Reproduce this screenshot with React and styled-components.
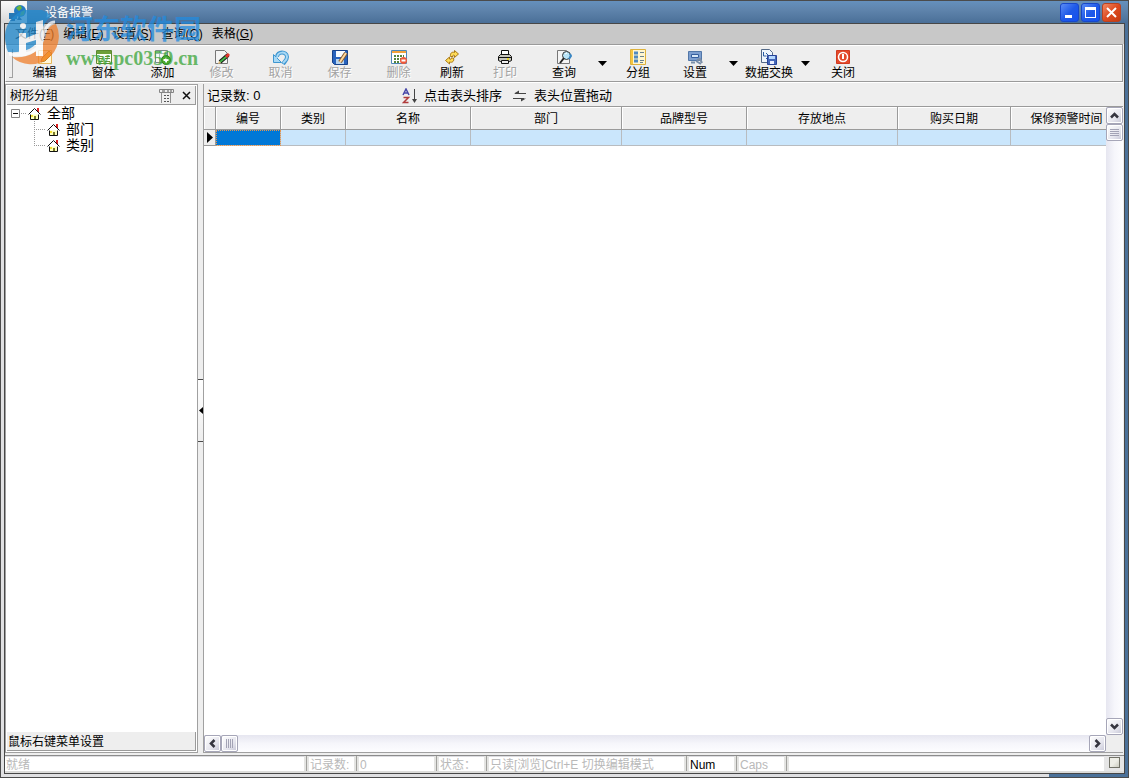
import React, { useState } from "react";
import styled, { createGlobalStyle, css } from "styled-components";

const GlobalStyle = createGlobalStyle`
	* {
		box-sizing: border-box;
	}
	body {
		margin: 0;
		color: #000;
		font: 12px/16px "Liberation Sans", "Noto Sans CJK SC", sans-serif;
	}
	button {
		margin: 0;
		padding: 0;
		border: none;
		background: none;
		color: inherit;
		font: inherit;
	}
	svg {
		display: block;
		flex: none;
	}
`;

// Window frame

const Window = styled.div`
	display: flex;
	flex-direction: column;
	height: 100vh;
	overflow: hidden;
	border: 1px solid #4b4b4b;
	background: #4b7199;
`;

const TitleBar = styled.header`
	display: flex;
	flex: none;
	height: 22px;
	padding-right: 7px;
	background: linear-gradient(#6590bd, #5f84ac 40%, #4a6f98);
`;

const AppIcon = styled.div`
	width: 26px;
	padding: 3px 0 0 6px;
	background: linear-gradient(#fafafa, #d8d8d8);
`;

const Title = styled.h1`
	flex: 1;
	margin: 0 0 0 18px;
	color: #fff;
	font-size: 12px;
	font-weight: 400;
	line-height: 24px;
`;

const WindowButtons = styled.div`
	display: flex;
	gap: 2px;
	padding-top: 2px;
`;

const WindowButton = styled.button`
	width: 19px;
	height: 19px;
	border: 1px solid ${(props) => (props.$close ? "#b9421f" : "#1747c9")};
	border-radius: 3px;
	background: ${(props) =>
		props.$close
			? "linear-gradient(135deg, #f08a66, #dd4b20 50%, #c73a10)"
			: "linear-gradient(135deg, #5b8cf5, #1f5ae8 50%, #1350f0)"};
`;

const Frame = styled.div`
	display: flex;
	flex: 1;
	min-height: 0;
	padding: 0 3px 3px;
	background: linear-gradient(90deg, #e0e0e2 93%, #4b7199 93%);
`;

const Body = styled.div`
	display: flex;
	flex: 1;
	flex-direction: column;
	min-width: 0;
	border: 1px solid #474747;
	background: #eee;
`;

// Menu and toolbar

const MenuBar = styled.nav`
	display: flex;
	flex: none;
	gap: 9px;
	height: 20px;
	padding-left: 10px;
	background: #c8c8c8;
`;

const MenuItem = styled.button`
	line-height: 20px;
`;

const ToolBar = styled.div`
	display: flex;
	flex: none;
	height: 38px;
	margin-right: 1px;
	border: 1px solid #9a9a9a;
	border-left-color: #fff;
	box-shadow: inset 0 1px #fff, 0 1px #fff;
`;

const Grip = styled.div`
	width: 4px;
	margin: 4px 2px 3px 3px;
	border-right: 1px solid #a0a0a0;
	border-bottom: 1px solid #a0a0a0;
`;

const ToolButton = styled.button`
	display: flex;
	flex: none;
	flex-direction: column;
	align-items: center;
	width: ${(props) => props.$width}px;
	padding-top: 4px;

	&:disabled {
		color: #a3a3a3;
		text-shadow: 1px 1px #fff;
	}
`;

const ToolLabel = styled.span`
	line-height: 16px;
	white-space: nowrap;
`;

const DropButton = styled.button`
	display: flex;
	flex: none;
	justify-content: center;
	width: ${(props) => props.$width}px;
	padding-top: 16px;
`;

// Tree panel

const Content = styled.main`
	display: flex;
	flex: 1;
	min-height: 0;
	padding: 2px 1px 2px 0;
`;

const TreePanel = styled.aside`
	display: flex;
	flex: none;
	flex-direction: column;
	width: 193px;
	padding: 1px;
	border: 1px solid #a0a0a0;
	background: #fff;
`;

const PanelBar = styled.div`
	display: flex;
	flex: none;
	align-items: center;
	gap: 8px;
	height: 19px;
	padding: 1px 4px 0 3px;
	border-right: 1px solid #9a9a9a;
	border-bottom: 1px solid #9a9a9a;
	background: #eee;
	line-height: 18px;
`;

const PanelTitle = styled.h2`
	flex: 1;
	margin: 0;
	font-size: 12px;
	font-weight: 400;
`;

const PanelFooter = styled(PanelBar)`
	padding-left: 1px;
`;

const Tree = styled.ul`
	flex: 1;
	margin: 0;
	padding: 0 0 0 4px;
	list-style: none;
	font-size: 14px;
`;

const Branch = styled.ul`
	margin: 0;
	padding: 0 0 0 23px;
	list-style: none;
`;

const TreeRow = styled.div`
	display: flex;
	align-items: center;
	height: 16px;
`;

const TreeLabel = styled.span`
	margin-left: 6px;
`;

const Expander = styled.button`
	display: flex;
`;

const Splitter = styled.div`
	display: flex;
	flex: none;
	flex-direction: column;
	justify-content: center;
	width: 6px;
	padding-bottom: 17px;
	border-right: 1px solid #a0a0a0;
`;

const SplitHandle = styled.button`
	display: flex;
	align-items: center;
	justify-content: flex-end;
	height: 63px;
	border-top: 1px solid #4a4a4a;
	border-bottom: 1px solid #4a4a4a;
	background: linear-gradient(#fff, #eee);
`;

// Record grid

const Records = styled.section`
	display: flex;
	flex: 1;
	flex-direction: column;
	min-width: 0;
`;

const InfoBar = styled.div`
	display: flex;
	flex: none;
	align-items: center;
	height: 22px;
	padding: 2px 0 0 3px;
	font-size: 13px;
`;

const Count = styled.span`
	width: 195px;
`;

const Hint = styled.span`
	display: flex;
	align-items: center;
	gap: 6px;
	margin-right: 10px;
`;

const GridArea = styled.div`
	display: grid;
	flex: 1;
	grid-template: minmax(0, 1fr) 17px / minmax(0, 1fr) 17px;
	min-height: 0;
	border-top: 1px solid #9a9a9a;
	border-bottom: 1px solid #a0a0a0;
`;

const Viewport = styled.div`
	overflow: hidden;
	background: #fff;
`;

const Table = styled.table`
	width: ${(props) => props.$width}px;
	border-collapse: separate;
	border-spacing: 0;
	table-layout: fixed;
`;

const HeadCell = styled.th`
	width: ${(props) => props.$width}px;
	height: 23px;
	padding: 2px 0 0;
	border-right: 1px solid #9a9a9a;
	border-bottom: 1px solid #9a9a9a;
	background: #eee;
	box-shadow: inset 1px 1px #fff;
	font-weight: 400;
`;

const Cell = styled.td`
	height: 16px;
	padding: 0;
	border-right: 1px solid #b8bcc0;
	border-bottom: 1px solid #b8bcc0;
	background: #cae6fc;

	${(props) =>
		props.$selected &&
		css`
			background: #0078d7;
			outline: 1px dotted #e8964c;
			outline-offset: -1px;
		`}
`;

const MarkerCell = styled.td`
	height: 16px;
	padding: 0 0 0 3px;
	border-right: 1px solid #9a9a9a;
	border-bottom: 1px solid #9a9a9a;
	background: #eee;
`;

const ScrollBar = styled.div`
	display: flex;
	flex-direction: ${(props) => (props.$vertical ? "column" : "row")};
	background: linear-gradient(
		${(props) => (props.$vertical ? "90deg" : "180deg")},
		#e6e6f0,
		#f6f6fb 50%,
		#fdfdff
	);
`;

const ScrollButton = styled.button`
	display: flex;
	flex: none;
	align-items: center;
	justify-content: center;
	width: 17px;
	height: 17px;
	margin: ${(props) =>
		props.$end ? (props.$vertical ? "auto 0 0" : "0 0 0 auto") : "0"};
	border: 1px solid #a6a6b8;
	border-radius: 2px;
	background: linear-gradient(135deg, #fff, #e6e6ee 60%, #c6c6d6);
	box-shadow: inset 0 0 0 1px #fff;
`;

// Status bar

const StatusBar = styled.footer`
	display: flex;
	flex: none;
	height: 18px;
	border-top: 1px solid #8c8c8c;
	border-bottom: 2px solid #dcdcda;
	background: #fff;
	box-shadow: inset 0 1px #dcdce0;
	line-height: 18px;
`;

const StatusCell = styled.div`
	display: flex;
	flex: none;
	justify-content: space-between;
	width: ${(props) => props.$width}px;
	padding-left: 1px;
	color: ${(props) => (props.$active ? "#000" : "#b9b9b9")};
	white-space: nowrap;

	&::after {
		content: "";
		width: 1px;
		border: 2px solid #e4e4e2;
		border-width: 0 2px;
		background: #a0a09c;
		box-sizing: content-box;
	}
`;

const SizeGrip = styled.div`
	display: flex;
	align-items: flex-start;
	width: 20px;
	margin-left: auto;
	padding: 1px 0 0 5px;
	background: #e6e6e6;
`;

const GripBox = styled.span`
	width: 11px;
	height: 11px;
	border: 1px solid #737368;
	background: linear-gradient(135deg, #eeeee6 50%, #ccccc0);
`;

// Site stamp over the top left corner

const Stamp = styled.div`
	position: absolute;
	top: 10px;
	left: 5px;
	display: flex;
	gap: 4px;
	opacity: 0.75;
	pointer-events: none;
`;

const StampText = styled.div`
	display: flex;
	flex-direction: column;
`;

const StampName = styled.span`
	color: #228bdf;
	font-size: 27px;
	font-weight: 700;
	line-height: 40px;
`;

const StampUrl = styled.span`
	color: #3aa539;
	font: 700 20px/16px "Liberation Serif", serif;
`;

const Icon = ({ children, size = 16, width, height }) => (
	<svg
		width={width || size}
		height={height || size}
		viewBox={`0 0 ${width || size} ${height || size}`}
		aria-hidden="true"
	>
		{children}
	</svg>
);

const Page = () => (
	<path d="M1.5 1.5h9l3 3v10h-12z" fill="#f4f4f4" stroke="#777" />
);

const icons = {
	edit: (
		<Icon>
			<path d="M1.5 1.5h13v13h-13z" fill="#fff6d8" stroke="#e6b85c" />
			<path d="M4 13l1-4 7-7 3 3-7 7z" fill="#ffc335" stroke="#b88327" />
		</Icon>
	),
	form: (
		<Icon>
			<path d="M.5 1.5h15v13H.5z" fill="#fafff4" stroke="#5e8b32" />
			<path d="M1 2h14v3H1z" fill="#6da039" />
			<path
				d="M3 7.5h4M3 9.5h4M3 12.5h4M9 7.5h5M9 9.5h5M9 12.5h5"
				stroke="#70913e"
			/>
		</Icon>
	),
	add: (
		<Icon>
			<path d="M.5 1.5h12v12H.5z" fill="#f7f7f7" stroke="#7b8b87" />
			<path d="M1 4.5h11M4.5 2v11" stroke="#a9bcb9" />
			<circle cx="11" cy="11" r="4.5" fill="#52a928" stroke="#287819" />
			<path d="M8.5 11h5M11 8.5v5" stroke="#fff" strokeWidth="2" />
		</Icon>
	),
	modify: (
		<Icon>
			<Page />
			<path d="M6 13l8-7" stroke="#171717" strokeWidth="4" />
			<path d="M6 13l7-6" stroke="#45b54a" strokeWidth="2" />
			<path d="M12 8l3-3" stroke="#e3362d" strokeWidth="3" />
			<path d="M4 15l1-3 2 2z" fill="#e6bc77" />
		</Icon>
	),
	cancel: (
		<Icon>
			<path
				d="M4 8c0-6 10-6 10 0 0 3-2 4-4 7"
				fill="none"
				stroke="#3e96d0"
				strokeWidth="4"
			/>
			<path d="M.5 5.5v8h8z" fill="#a7d8f5" stroke="#3e96d0" />
			<path
				d="M4 9c0-7 10-7 10-1 0 3-2 4-4 6"
				fill="none"
				stroke="#a7d8f5"
				strokeWidth="2"
			/>
		</Icon>
	),
	save: (
		<Icon>
			<path d="M.5 1.5h15v14H2.5l-2-2z" fill="#2863bd" stroke="#17428b" />
			<path d="M4 2h9v6H4z" fill="#f6faff" />
			<path d="M4 10h8v5H4z" fill="#b8d4ee" />
			<path d="M8 13l6-9" stroke="#875a2b" strokeWidth="4" />
			<path d="M8 13l6-9" stroke="#ffd9a0" strokeWidth="2" />
		</Icon>
	),
	remove: (
		<Icon>
			<path d="M.5 1.5h15v13H.5z" fill="#fff" stroke="#4e88b8" />
			<path d="M1 2h14v2H1z" fill="#f1a33b" />
			<path
				d="M3 7h10M3 10h10M3 13h6"
				stroke="#55843c"
				strokeWidth="2"
				strokeDasharray="2 1"
			/>
			<circle cx="12.5" cy="11.5" r="3.5" fill="#ee593b" />
			<path d="M10.5 11.5h4" stroke="#fff" strokeWidth="2" />
		</Icon>
	),
	refresh: (
		<Icon>
			<path
				d="M6.5 7.5C6 4 8 2.5 10.5 3.5V1.5L14.5 5l-4 3.5v-2c-1-1-2 0-1.5 1z"
				fill="#ffdc57"
				stroke="#a97816"
			/>
			<path
				d="M9.5 9c1 3-1 5-4 4v2L1.5 11.5l4-3.5v2c1 1 2 0 1.5-1z"
				fill="#ffdc57"
				stroke="#a97816"
			/>
		</Icon>
	),
	print: (
		<Icon>
			<path d="M4.5 1.5h7v5h-7z" fill="#fff" stroke="#111" />
			<path
				d="M3.5 5.5h9l2 2v4l-2 1h-9l-2-1v-4z"
				fill="#c5c5bb"
				stroke="#111"
			/>
			<path d="M2 8.5h12" stroke="#111" />
			<path d="M10 10h2" stroke="#e7d629" strokeWidth="2" />
			<path d="M4.5 11.5h7v3h-7z" fill="#eee" stroke="#111" />
		</Icon>
	),
	search: (
		<Icon>
			<Page />
			<circle cx="10.5" cy="6.5" r="4" fill="#b9e4f7" stroke="#333" />
			<path d="M8 9l-4 5" stroke="#222" strokeWidth="2" />
			<path d="M9 5l2-1" stroke="#fff" />
			<path d="M14 5l1 2-2 3" fill="none" stroke="#3a87c4" strokeWidth="2" />
		</Icon>
	),
	group: (
		<Icon>
			<path d="M.5 .5h15v15H.5z" fill="#fff6cf" stroke="#ddb13b" />
			<path d="M1 1h2v14H1z" fill="#f5c63f" />
			<path
				d="M4 4h4M4 8h4M4 12h4"
				stroke="#508ac0"
				strokeWidth="3"
			/>
			<path
				d="M10 3.5h4M10 7.5h4M10 11.5h4M10 13.5h3"
				stroke="#698190"
			/>
		</Icon>
	),
	settings: (
		<Icon>
			<path d="M1.5 2.5h13v9h-13z" fill="#7d9fd0" stroke="#5277a8" />
			<path d="M4.5 5.5h7v3h-7z" fill="#d9e9f8" stroke="#355f9f" />
			<path
				d="M4 13.5h4M9 12l5 3M10 11l3-1 2 4"
				fill="none"
				stroke="#7b8fa8"
				strokeWidth="2"
			/>
		</Icon>
	),
	exchange: (
		<Icon>
			<path d="M.5 .5h8l3 3v10H.5z" fill="#eef5fc" stroke="#536987" />
			<path
				d="M2.5 3v4h3M5 4l3 3-3 3"
				fill="none"
				stroke="#2a5da3"
			/>
			<path d="M6.5 6.5h9v9h-9z" fill="#4567b8" stroke="#28449a" />
			<path d="M8 7h6v3H8z" fill="#b5d8ff" />
			<path d="M9 12h4v3H9z" fill="#e8eeff" />
		</Icon>
	),
	close: (
		<Icon>
			<path d="M1.5 1.5h13v13h-13z" fill="#e44a2b" stroke="#d03a20" />
			<circle
				cx="8"
				cy="8"
				r="4.5"
				fill="none"
				stroke="#fff"
				strokeWidth="1.5"
			/>
			<path d="M8 5v5" stroke="#fff" strokeWidth="2" />
		</Icon>
	),
};

const House = () => (
	<Icon width={13} height={13}>
		<path d="M9 1h2v4H9z" fill="#d22" />
		<path d="M2.5 6.5h8v6h-8z" fill="#ffffbd" stroke="#111" />
		<path d="M.5 7.5l6-6 6 6" fill="#fff" stroke="#111" />
		<path d="M6 9h2v3H6z" fill="#7b7b29" />
		<path d="M3 8h2v2H3z" fill="#f5de2c" />
	</Icon>
);

const Chevron = ({ turn }) => (
	<Icon width={11} height={11}>
		<path
			d="M2 7.5l3.5-3.5L9 7.5"
			fill="none"
			stroke="#35353f"
			strokeWidth="2.5"
			transform={`rotate(${turn} 5.5 5.5)`}
		/>
	</Icon>
);

const ThumbLines = ({ turn }) => (
	<Icon width={9} height={9}>
		<path
			d="M0 1.5h9M0 3.5h9M0 5.5h9M0 7.5h9"
			stroke="#a3a3b5"
			transform={`rotate(${turn} 4.5 4.5)`}
		/>
	</Icon>
);

const menus = [
	["文件", "F"],
	["编辑", "E"],
	["设置", "S"],
	["查询", "Q"],
	["表格", "G"],
];

const tools = [
	{ icon: "edit", label: "编辑", width: 59 },
	{ icon: "form", label: "窗体", width: 59 },
	{ icon: "add", label: "添加", width: 59 },
	{ icon: "modify", label: "修改", width: 59, disabled: true },
	{ icon: "cancel", label: "取消", width: 59, disabled: true },
	{ icon: "save", label: "保存", width: 59, disabled: true },
	{ icon: "remove", label: "删除", width: 59, disabled: true },
	{ icon: "refresh", label: "刷新", width: 48 },
	{ icon: "print", label: "打印", width: 58, disabled: true },
	{ icon: "search", label: "查询", width: 60, drop: 16 },
	{ icon: "group", label: "分组", width: 56 },
	{ icon: "settings", label: "设置", width: 58, drop: 18 },
	{ icon: "exchange", label: "数据交换", width: 54, drop: 18 },
	{ icon: "close", label: "关闭", width: 58 },
];

const columns = [
	{ label: "编号", width: 65 },
	{ label: "类别", width: 65 },
	{ label: "名称", width: 125 },
	{ label: "部门", width: 151 },
	{ label: "品牌型号", width: 125 },
	{ label: "存放地点", width: 151 },
	{ label: "购买日期", width: 113 },
	{ label: "保修预警时间", width: 112 },
];

const MARKER_WIDTH = 12;
const tableWidth = columns.reduce((sum, col) => sum + col.width, MARKER_WIDTH);

const statusCells = [
	{ text: "就绪", width: 304 },
	{ text: "记录数:", width: 50 },
	{ text: "0", width: 80 },
	{ text: "状态：", width: 50 },
	{ text: "只读[浏览]Ctrl+E 切换编辑模式", width: 200 },
	{ text: "Num", width: 50, active: true },
	{ text: "Caps", width: 50 },
];

const branches = ["部门", "类别"];

export default function App() {
	const [open, setOpen] = useState(true); // root node of the tree
	const [selected, setSelected] = useState(0); // column of the current cell

	return (
		<Window>
			<GlobalStyle />
			<TitleBar>
				<AppIcon>
					<Icon width={20} height={18}>
						<circle cx="13" cy="7" r="6" fill="#247ac2" />
						<path
							d="M9 4l4-3 2 3-3 3zM14 8l4-2-1 5-4 1z"
							fill="#69b63d"
						/>
						<path d="M2 9h8v6H2z" fill="#2878b5" />
						<path d="M5 15h3v2H3M12 12l3 4h-5z" fill="#264f81" />
					</Icon>
				</AppIcon>
				<Title>设备报警</Title>
				<WindowButtons>
					<WindowButton aria-label="最小化">
						<Icon width={17} height={17}>
							<path d="M4 11h7v3H4z" fill="#fff" />
						</Icon>
					</WindowButton>
					<WindowButton aria-label="最大化">
						<Icon width={17} height={17}>
							<path d="M3 3h11v11H3zM4 6v7h9V6z" fill="#fff" fillRule="evenodd" />
						</Icon>
					</WindowButton>
					<WindowButton $close aria-label="关闭窗口">
						<Icon width={17} height={17}>
							<path d="M4 4l9 9M13 4l-9 9" stroke="#fff" strokeWidth="2" />
						</Icon>
					</WindowButton>
				</WindowButtons>
			</TitleBar>
			<Frame>
				<Body>
					<MenuBar>
						{menus.map(([name, key]) => (
							<MenuItem key={key}>
								{name}(<u>{key}</u>)
							</MenuItem>
						))}
					</MenuBar>
					<ToolBar>
						<Grip />
						{tools.map((tool) => (
							<React.Fragment key={tool.icon}>
								<ToolButton $width={tool.width} disabled={tool.disabled}>
									{icons[tool.icon]}
									<ToolLabel>{tool.label}</ToolLabel>
								</ToolButton>
								{tool.drop && (
									<DropButton
										$width={tool.drop}
										aria-label={`${tool.label}选项`}
									>
										<Icon width={9} height={5}>
											<path d="M0 0h9L4.5 5z" />
										</Icon>
									</DropButton>
								)}
							</React.Fragment>
						))}
					</ToolBar>
					<Content>
						<TreePanel>
							<PanelBar>
								<PanelTitle>树形分组</PanelTitle>
								<button aria-label="分组选项">
									<Icon width={15} height={14}>
										<path d="M.5 .5h14v3H.5z" fill="#eee" stroke="#858585" />
										<path d="M3 2h3M8 2h2M11 2h2" stroke="#555" />
										<path
											d="M2.5 4v10M11.5 4v10"
											fill="none"
											stroke="#909090"
										/>
										<path
											d="M5 6.5h5M5 9.5h5M5 12.5h5"
											stroke="#555"
											strokeDasharray="2 1"
										/>
									</Icon>
								</button>
								<button aria-label="关闭分组">
									<Icon width={9} height={9}>
										<path
											d="M1 1l7 7M8 1l-7 7"
											stroke="#111"
											strokeWidth="1.5"
										/>
									</Icon>
								</button>
							</PanelBar>
							<Tree>
								<li>
									<TreeRow>
										<Expander
											aria-label="展开或收起"
											aria-expanded={open}
											onClick={() => setOpen(!open)}
										>
											<Icon width={17} height={9}>
												<path
													d="M.5 .5h8v8h-8z"
													fill="#fff"
													stroke="#848484"
												/>
												<path d="M2 4.5h5" stroke="#111" />
												{!open && <path d="M4.5 2v5" stroke="#111" />}
												<path
													d="M10 4.5h6"
													stroke="#999"
													strokeDasharray="1 1"
												/>
											</Icon>
										</Expander>
										<House />
										<TreeLabel>全部</TreeLabel>
									</TreeRow>
									{open && (
										<Branch>
											{branches.map((name, i) => (
												<li key={name}>
													<TreeRow>
														<Icon width={13} height={16}>
															<path
																d={`M.5 0v${
																	i === branches.length - 1 ? 8 : 16
																}M0 8.5h12`}
																stroke="#999"
																strokeDasharray="1 1"
															/>
														</Icon>
														<House />
														<TreeLabel>{name}</TreeLabel>
													</TreeRow>
												</li>
											))}
										</Branch>
									)}
								</li>
							</Tree>
							<PanelFooter>鼠标右键菜单设置</PanelFooter>
						</TreePanel>
						<Splitter>
							<SplitHandle aria-label="收起分组">
								<Icon width={4} height={7}>
									<path d="M4 0v7L0 3.5z" />
								</Icon>
							</SplitHandle>
						</Splitter>
						<Records>
							<InfoBar>
								<Count>记录数: 0</Count>
								<Hint>
									<Icon>
										<path
											d="M1 7l3-6 3 6M2 5h4"
											fill="none"
											stroke="#4646a8"
											strokeWidth="1.5"
										/>
										<path
											d="M1.500 9.500h5l-5 5h5"
											fill="none"
											stroke="#b03c3c"
											strokeWidth="1.5"
										/>
										<path d="M12.5 1v11" stroke="#444" />
										<path d="M10 11h5l-2.5 4z" fill="#444" />
									</Icon>
									点击表头排序
								</Hint>
								<Hint>
									<Icon>
										<path d="M3 5.5h11M1 10.5h11" stroke="#444" />
										<path d="M2 5.5l5-3v3zM14 10.5l-5 3v-3z" fill="#444" />
									</Icon>
									表头位置拖动
								</Hint>
							</InfoBar>
							<GridArea>
								<Viewport>
									<Table $width={tableWidth}>
										<thead>
											<tr>
												<HeadCell $width={MARKER_WIDTH} />
												{columns.map((col) => (
													<HeadCell key={col.label} $width={col.width}>
														{col.label}
													</HeadCell>
												))}
											</tr>
										</thead>
										<tbody>
											<tr>
												<MarkerCell>
													<Icon width={6} height={11}>
														<path d="M0 0l6 5.5L0 11z" />
													</Icon>
												</MarkerCell>
												{columns.map((col, i) => (
													<Cell
														key={col.label}
														$selected={i === selected}
														onClick={() => setSelected(i)}
													/>
												))}
											</tr>
										</tbody>
									</Table>
								</Viewport>
								<ScrollBar $vertical>
									<ScrollButton $vertical aria-label="向上滚动">
										<Chevron turn={0} />
									</ScrollButton>
									<ScrollButton $vertical aria-label="垂直滑块">
										<ThumbLines turn={0} />
									</ScrollButton>
									<ScrollButton $vertical $end aria-label="向下滚动">
										<Chevron turn={180} />
									</ScrollButton>
								</ScrollBar>
								<ScrollBar>
									<ScrollButton aria-label="向左滚动">
										<Chevron turn={270} />
									</ScrollButton>
									<ScrollButton aria-label="水平滑块">
										<ThumbLines turn={90} />
									</ScrollButton>
									<ScrollButton $end aria-label="向右滚动">
										<Chevron turn={90} />
									</ScrollButton>
								</ScrollBar>
							</GridArea>
						</Records>
					</Content>
					<StatusBar>
						{statusCells.map((cell) => (
							<StatusCell
								key={cell.text}
								$width={cell.width}
								$active={cell.active}
							>
								{cell.text}
							</StatusCell>
						))}
						<SizeGrip>
							<GripBox />
						</SizeGrip>
					</StatusBar>
				</Body>
			</Frame>
			<Stamp>
				<Icon width={57} height={57}>
					<path
						d="M1 34A28 28 0 0 1 47 6C40 10 37 18 35 27C31 39 18 43 3 42Q1 38 1 34z"
						fill="#228bd0"
					/>
					<path
						d="M51 14A28 28 0 0 1 7 47C22 49 36 42 40 28C42 19 45 15 51 14z"
						fill="#f07f2b"
					/>
					<path
						d="M14 23h7v5l10-4V12l7-2v36h-7V30l-10 3v13h-7z"
						fill="#fff"
					/>
					<path
						d="M4 44C20 47 35 42 38 27 40 18 44 12 50 12"
						fill="none"
						stroke="#fff"
						strokeWidth="3"
					/>
					<circle cx="18" cy="16" r="3" fill="#fff" />
				</Icon>
				<StampText>
					<StampName>河东软件园</StampName>
					<StampUrl>www.pc0359.cn</StampUrl>
				</StampText>
			</Stamp>
		</Window>
	);
}
